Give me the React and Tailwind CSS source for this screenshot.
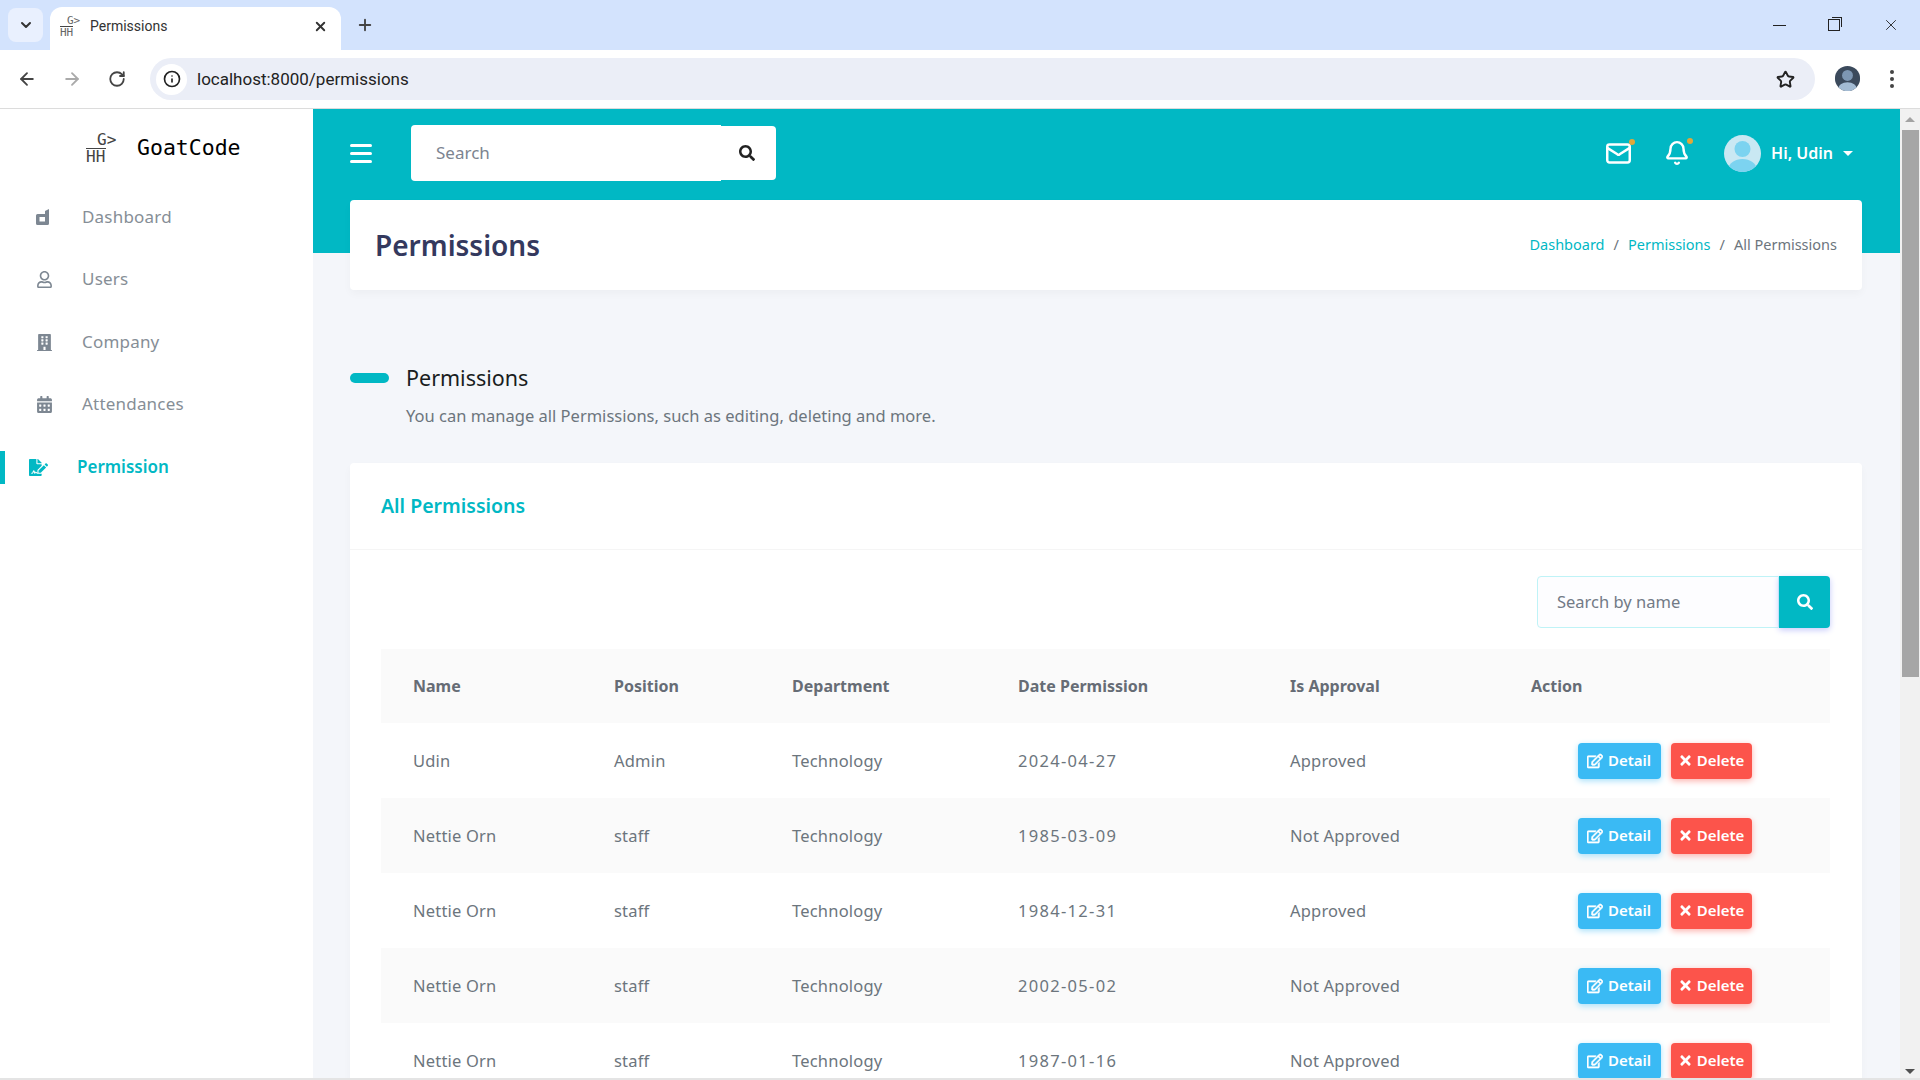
import React from 'react';
import {
  ArrowLeft,
  ArrowRight,
  Bell,
  ChevronDown,
  Info,
  Mail,
  Plus,
  RotateCw,
  Star,
  X,
} from 'lucide-react';
import {
  FaBuilding,
  FaCalendarAlt,
  FaFileSignature,
  FaRegEdit,
  FaRegUser,
  FaSearch,
  FaTimes,
} from 'react-icons/fa';

const rows = [
  ['Udin', 'Admin', 'Technology', '2024-04-27', 'Approved'],
  ['Nettie Orn', 'staff', 'Technology', '1985-03-09', 'Not Approved'],
  ['Nettie Orn', 'staff', 'Technology', '1984-12-31', 'Approved'],
  ['Nettie Orn', 'staff', 'Technology', '2002-05-02', 'Not Approved'],
  ['Nettie Orn', 'staff', 'Technology', '1987-01-16', 'Not Approved'],
];

const headers = ['Name', 'Position', 'Department', 'Date Permission', 'Is Approval', 'Action'];

const DashboardIcon = () => (
  <svg width="13" height="16" viewBox="0 0 13 16" fill="#7d8792">
    <path
      d="M1.500 5H9V2l4-2v14.500a1.500 1.500 0 0 1-1.500 1.500h-10A1.500 1.500 0 0 1 0 14.500v-8A1.500 1.500 0 0 1 1.500 5Zm2 3v4.500H9V8Z"
      fillRule="evenodd"
    />
  </svg>
);

const LogoMark = ({ small }) => (
  <div
    className={`flex flex-col font-['DejaVu_Sans_Mono',monospace] leading-none ${
      small ? 'w-5 text-[11px] text-[#666]' : 'w-[30px] pt-[2px] text-[16px] text-[#444]'
    }`}
  >
    <span className={small ? 'ml-[7px]' : 'ml-[11px]'}>G&gt;</span>
    <span className="w-fit border-t border-[#444]">HH</span>
  </div>
);

const Avatar = ({ dark }) => (
  <svg width="37" height="37" viewBox="0 0 37 37">
    <clipPath id={dark ? 'a-dark' : 'a-light'}>
      <circle cx="18.500" cy="18.500" r="18.500" />
    </clipPath>
    <g clipPath={`url(#${dark ? 'a-dark' : 'a-light'})`}>
      <rect width="37" height="37" fill={dark ? '#3b4a5c' : '#c9e8f3'} />
      <circle cx="18.500" cy="14" r="8" fill={dark ? '#7d97b3' : '#7cd3f0'} />
      <ellipse cx="18.500" cy="34" rx="14" ry="10" fill={dark ? '#a3bbd3' : '#7cd3f0'} />
    </g>
  </svg>
);

const SideItem = ({ icon, label }) => (
  <div className="flex h-[62.500px] items-center pl-[36px] text-[#868e96]">
    <span className="flex w-[46px] items-center text-[#7d8792]">{icon}</span>
    <span className="pb-[2px]">{label}</span>
  </div>
);

const BrowserChrome = () => (
  <>
    <div className="flex h-[50px] shrink-0 items-end bg-[#d3e3fd] pl-2 text-[#333]">
      <div className="mb-2 flex h-[34px] w-[35px] items-center justify-center rounded-lg bg-[#e9f0fe]">
        <ChevronDown size={16} strokeWidth={3} />
      </div>
      <div className="ml-[7px] flex h-[43px] w-[291px] items-center rounded-t-xl bg-white pb-1 pl-[10px] pr-[13px] font-['Roboto',sans-serif] text-[14px]">
        <LogoMark small />
        <span className="ml-[10px]">Permissions</span>
        <X size={15} strokeWidth={3} className="ml-auto" />
      </div>
      <Plus size={18} strokeWidth={2.500} className="mb-4 ml-[15px] text-[#444]" />
      <div className="mb-[16px] ml-auto flex items-center gap-[42px] pr-[20px] text-[#222]">
        <div className="h-px w-[13px] bg-[#222]" />
        <div className="h-3 w-3 border border-[#222] shadow-[2px_-2px_0_-1px_#d3e3fd,3px_-3px_0_-1px_#222]" />
        <X size={18} strokeWidth={1.200} />
      </div>
    </div>
    <div className="flex h-[59px] shrink-0 items-center rounded-t-lg border-b border-[#dcdcdc] bg-white pl-[17px] pr-[26px] text-[#444]">
      <ArrowLeft size={20} strokeWidth={2.200} />
      <ArrowRight size={20} strokeWidth={2.200} className="ml-[25px] text-[#aaa]" />
      <RotateCw size={18} strokeWidth={2.400} className="ml-[26px]" />
      <div className="ml-[24px] flex h-[42px] flex-1 items-center rounded-full bg-[#ebeef7] pl-[6px] pr-5 font-['Roboto',sans-serif] text-[17px] text-[#222]">
        <span className="flex h-[31px] w-[31px] items-center justify-center rounded-full bg-white">
          <Info size={18} strokeWidth={2.200} />
        </span>
        <span className="ml-[10px] pt-[2px]">localhost:8000/permissions</span>
        <Star size={19} strokeWidth={2.400} className="ml-auto" />
      </div>
      <div className="ml-5 flex h-[25px] w-[25px] items-center justify-center pb-[2px]">
        <div className="origin-center scale-[0.68]">
          <Avatar dark />
        </div>
      </div>
      <div className="ml-[30px] flex flex-col gap-[3px]">
        <span className="h-1 w-1 rounded-full bg-[#444]" />
        <span className="h-1 w-1 rounded-full bg-[#444]" />
        <span className="h-1 w-1 rounded-full bg-[#444]" />
      </div>
    </div>
  </>
);

const Sidebar = () => (
  <aside className="w-[313px] shrink-0 bg-white text-[17px] tracking-[0.2px]">
    <div className="flex h-[77px] items-center pl-[86px]">
      <LogoMark />
      <span className="ml-[21px] pt-[2px] font-['DejaVu_Sans_Mono',monospace] text-[21.500px] tracking-normal text-black">GoatCode</span>
    </div>
    <SideItem icon={<DashboardIcon />} label="Dashboard" />
    <SideItem icon={<FaRegUser size={17} />} label="Users" />
    <SideItem icon={<FaBuilding size={17} />} label="Company" />
    <SideItem icon={<FaCalendarAlt size={17} />} label="Attendances" />
    <div className="flex h-[62.500px] items-center">
      <div className="h-[33px] w-[5px] bg-[#01b8c4]" />
      <span className="ml-6 flex w-[48px] items-center text-[#01b8c4]">
        <FaFileSignature size={19} />
      </span>
      <span className="pb-[2px] font-semibold tracking-normal text-[#01b8c4]">Permission</span>
    </div>
  </aside>
);

const Navbar = () => (
  <div className="flex h-[91px] items-center pb-[3px] pl-[37px] pr-[47px] text-white">
    <div className="flex w-[22px] flex-col gap-[5px]">
      <span className="h-[3px] rounded bg-white" />
      <span className="h-[3px] rounded bg-white" />
      <span className="h-[3px] rounded bg-white" />
    </div>
    <div className="ml-[39px] flex items-center">
      <div className="flex h-[56px] w-[310px] items-center rounded-l bg-white pl-[25px] text-[17px] text-[#7c8490]">Search</div>
      <div className="flex h-[54px] w-[55px] items-center justify-center rounded-r bg-white pr-[3px] text-[#222]">
        <FaSearch size={16} />
      </div>
    </div>
    <div className="relative ml-auto">
      <Mail size={27} strokeWidth={2.200} />
      <span className="absolute -right-[3px] -top-[1px] h-[6px] w-[6px] rounded-full bg-[#e0a83a]" />
    </div>
    <div className="relative ml-[32px]">
      <Bell size={26} strokeWidth={2.200} />
      <span className="absolute -right-[3px] -top-[2px] h-[6px] w-[6px] rounded-full bg-[#e0a83a]" />
    </div>
    <div className="ml-[34px]">
      <Avatar />
    </div>
    <span className="ml-[10px] text-[16px] font-semibold">Hi, Udin</span>
    <span className="ml-[10px] h-0 w-0 border-x-[5px] border-t-[5px] border-x-transparent border-t-white" />
  </div>
);

const PermissionsTable = () => (
  <table className="w-full table-fixed border-collapse text-[16.500px] tracking-[0.2px] text-[#6c757d]">
    <colgroup>
      <col className="w-[201px]" />
      <col className="w-[178px]" />
      <col className="w-[226px]" />
      <col className="w-[272px]" />
      <col className="w-[241px]" />
      <col />
    </colgroup>
    <thead>
      <tr className="h-[74px] bg-[#fafafa]">
        {headers.map((h) => (
          <th key={h} className="pl-8 text-left text-[16px] font-bold tracking-normal text-[#666c75]">
            {h}
          </th>
        ))}
      </tr>
    </thead>
    <tbody>
      {rows.map((row, i) => (
        <tr key={i} className={`h-[75px] ${i % 2 === 1 ? 'bg-[#fafafa]' : ''}`}>
          {row.map((cell, j) => (
            <td key={j} className={j === 3 ? 'pl-8 pt-[2px] tracking-[1.300px]' : 'pl-8 pt-[2px]'}>
              {cell}
            </td>
          ))}
          <td>
            <div className="flex justify-center gap-[10px] text-[15px] font-semibold tracking-normal text-white">
              <button className="flex h-9 w-[83px] items-center justify-center gap-[5px] rounded bg-[#3abaf4] shadow-[0_2px_6px_#a8e0fa]">
                <FaRegEdit size={16} stroke="currentColor" strokeWidth={20} />
                Detail
              </button>
              <button className="flex h-9 w-[81px] items-center justify-center gap-[4px] rounded bg-[#fc544b] shadow-[0_2px_6px_#fdb0ab]">
                <FaTimes size={15} />
                Delete
              </button>
            </div>
          </td>
        </tr>
      ))}
    </tbody>
  </table>
);

const Content = () => (
  <main className="min-w-0 flex-1 overflow-hidden bg-[#f4f6fa] bg-[linear-gradient(#01b8c4_144px,#f4f6fa_144px)]">
    <Navbar />
    <div className="pl-[37px] pr-[38px]">
      <div className="flex h-[90px] items-center justify-between rounded bg-white px-[25px] shadow-[0_4px_8px_rgba(0,0,0,0.03)]">
        <h1 className="text-[28px] font-semibold text-[#34395e]">Permissions</h1>
        <div className="flex items-center gap-[9px] text-[14.500px] text-[#6c757d]">
          <span className="text-[#01b8c4]">Dashboard</span>
          <span>/</span>
          <span className="text-[#01b8c4]">Permissions</span>
          <span>/</span>
          <span>All Permissions</span>
        </div>
      </div>
      <div className="mt-[69px] flex items-center">
        <div className="h-[10px] w-[39px] rounded-full bg-[#01b8c4]" />
        <h2 className="ml-[17px] text-[21.500px] leading-[38px] text-[#191d21]">Permissions</h2>
      </div>
      <p className="ml-[57px] mt-[2px] -translate-x-px text-[16.500px] leading-[34px] text-[#6c757d]">
        You can manage all Permissions, such as editing, deleting and more.
      </p>
      <div className="mt-[30px] rounded bg-white shadow-[0_4px_8px_rgba(0,0,0,0.03)]">
        <div className="flex h-[87px] items-center border-b border-[#f5f5f5] pl-[31px] text-[19.500px] font-semibold text-[#01b8c4]">
          All Permissions
        </div>
        <div className="pl-[31px] pr-[32px] pt-[26px]">
          <div className="mb-[21px] flex justify-end">
            <div className="flex h-[52px] w-[242px] items-center rounded-l border border-[#bff3f7] bg-[#fdfdff] pl-[19px] text-[16.500px] text-[#727a86]">
              Search by name
            </div>
            <div className="flex h-[52px] w-[51px] items-center justify-center rounded-r bg-[#01b8c4] text-white shadow-[0_2px_6px_#c5c9fb]">
              <FaSearch size={16} />
            </div>
          </div>
          <PermissionsTable />
        </div>
      </div>
    </div>
  </main>
);

const Scrollbar = () => (
  <div className="flex w-5 shrink-0 flex-col items-center bg-[#f1f1f1]">
    <span className="mt-[8px] h-0 w-0 border-x-[5px] border-b-[5px] border-x-transparent border-b-[#a3a3a3]" />
    <div className="mt-[8px] h-[547px] w-[17px] bg-[#a6a6a6]" />
    <span className="mb-[4px] mt-auto h-0 w-0 border-x-[5px] border-t-[5px] border-x-transparent border-t-[#505050]" />
  </div>
);

export default function App() {
  return (
    <div className="flex h-screen flex-col overflow-hidden bg-white font-['Noto_Sans',sans-serif]">
      <BrowserChrome />
      <div className="flex min-h-0 flex-1">
        <Sidebar />
        <Content />
        <Scrollbar />
      </div>
      <div className="h-[2px] shrink-0 bg-[#e4e4e4]" />
    </div>
  );
}
